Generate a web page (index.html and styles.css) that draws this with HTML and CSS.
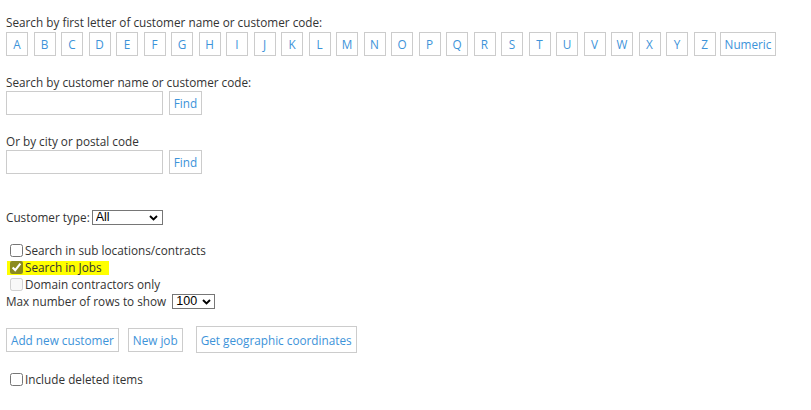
FILE: index.html
```html
<!DOCTYPE html>
<html>
<head>
<meta charset="utf-8">
<link rel="stylesheet" href="styles.css">
</head>
<body>
<div class="page">
  <div class="section letters-section">
    <div class="label">Search by first letter of customer name or customer code:</div>
    <div class="letters">
      <a class="btn letter">A</a><a class="btn letter">B</a><a class="btn letter">C</a><a class="btn letter">D</a><a class="btn letter">E</a><a class="btn letter">F</a><a class="btn letter">G</a><a class="btn letter">H</a><a class="btn letter">I</a><a class="btn letter">J</a><a class="btn letter">K</a><a class="btn letter">L</a><a class="btn letter">M</a><a class="btn letter">N</a><a class="btn letter">O</a><a class="btn letter">P</a><a class="btn letter">Q</a><a class="btn letter">R</a><a class="btn letter">S</a><a class="btn letter">T</a><a class="btn letter">U</a><a class="btn letter">V</a><a class="btn letter">W</a><a class="btn letter">X</a><a class="btn letter">Y</a><a class="btn letter">Z</a><a class="btn numeric">Numeric</a>
    </div>
  </div>

  <div class="section name-section">
    <div class="label">Search by customer name or customer code:</div>
    <div class="search-row">
      <input class="text-input" type="text">
      <a class="btn find">Find</a>
    </div>
  </div>

  <div class="section city-section">
    <div class="label">Or by city or postal code</div>
    <div class="search-row">
      <input class="text-input" type="text">
      <a class="btn find">Find</a>
    </div>
  </div>

  <div class="type-row">
    <span class="label">Customer type:</span>
    <span class="select-wrap type-wrap">
      <select class="select"><option>All</option></select>
      <svg class="chevron" width="9" height="6" viewBox="0 0 9 6"><path d="M1 1 L4.5 4.5 L8 1" fill="none" stroke="#000" stroke-width="1.9"/></svg>
    </span>
  </div>

  <div class="options">
    <label class="check-row"><input type="checkbox" class="cb"><span>Search in sub locations/contracts</span></label>
    <div class="check-row"><label class="highlight"><input type="checkbox" class="cb cb-checked" checked><span>Search in Jobs</span></label></div>
    <label class="check-row"><input type="checkbox" class="cb" disabled><span>Domain contractors only</span></label>
    <div class="check-row max-row">
      <span>Max number of rows to show</span>
      <span class="select-wrap rows-wrap">
        <select class="select"><option>100</option></select>
        <svg class="chevron" width="9" height="6" viewBox="0 0 9 6"><path d="M1 1 L4.5 4.5 L8 1" fill="none" stroke="#000" stroke-width="1.9"/></svg>
      </span>
    </div>
  </div>

  <div class="actions">
    <a class="btn action">Add new customer</a>
    <a class="btn action">New job</a>
    <button class="btn geo">Get geographic coordinates</button>
  </div>

  <label class="check-row deleted"><input type="checkbox" class="cb"><span>Include deleted items</span></label>
</div>
</body>
</html>
```

FILE: styles.css
```css
html, body {
  margin: 0;
  padding: 0;
  background: #ffffff;
}

body {
  font-family: "Open Sans", "Segoe UI", sans-serif;
  font-size: 11.75px;
  color: #333333;
}

.page {
  padding: 14px 6px 0 6px;
}

.label {
  line-height: 17px;
}

.section .label {
  display: block;
}

.letters {
  display: flex;
  gap: 5.5px;
  margin-top: 1px;
}

.btn {
  display: inline-flex;
  align-items: center;
  justify-content: center;
  box-sizing: border-box;
  height: 24px;
  border: 1px solid #cccccc;
  background: #ffffff;
  color: #3d93d9;
  font-family: "Open Sans", "Segoe UI", sans-serif;
  font-size: 11.75px;
  text-decoration: none;
  cursor: pointer;
}

.letter {
  width: 22px;
}

.numeric {
  width: 56px;
  margin-left: -1px;
}

.name-section {
  margin-top: 18px;
}

.city-section {
  margin-top: 18px;
}

.search-row {
  display: flex;
  gap: 6px;
}

.text-input {
  box-sizing: border-box;
  width: 157px;
  height: 24px;
  margin: 0;
  border: 1px solid #cccccc;
  padding: 2px 4px;
  font-family: "Open Sans", sans-serif;
  font-size: 12px;
}

.find {
  width: 33px;
}

.type-row {
  display: flex;
  align-items: center;
  gap: 2px;
  margin-top: 35px;
  height: 17px;
}

.select-wrap {
  position: relative;
  display: inline-flex;
}

.select {
  -webkit-appearance: none;
  appearance: none;
  box-sizing: border-box;
  width: 100%;
  height: 15px;
  margin: 0;
  padding: 0 0 0 3px;
  border: 1px solid #767676;
  border-radius: 0;
  background: #ffffff;
  font-family: "Liberation Sans", Arial, sans-serif;
  font-size: 12.5px;
  line-height: 13px;
  color: #000000;
}

.chevron {
  position: absolute;
  right: 5px;
  top: 5px;
  pointer-events: none;
}

.type-wrap {
  width: 71px;
}

.rows-wrap {
  width: 43px;
  margin-left: 6px;
}

.rows-wrap .chevron {
  right: 4px;
}

.options {
  margin-top: 16px;
}

.check-row {
  display: flex;
  align-items: center;
  height: 17px;
  line-height: 17px;
}

.cb {
  width: 13px;
  height: 13px;
  margin: 0 2px 0 4px;
}

.cb-checked {
  accent-color: #8b8b1f;
}

.highlight {
  display: flex;
  align-items: center;
  height: 14px;
  background: #ffff00;
  padding-right: 7px;
  margin-left: 1px;
}

.highlight .cb {
  margin-left: 3px;
}

.actions {
  display: flex;
  align-items: center;
  margin-top: 16px;
}

.action {
  padding: 0 4px;
  margin-right: 9px;
}

.geo {
  height: 27px;
  padding: 0 4px;
  margin-left: 4px;
}

.deleted {
  margin-top: 18px;
}
```
